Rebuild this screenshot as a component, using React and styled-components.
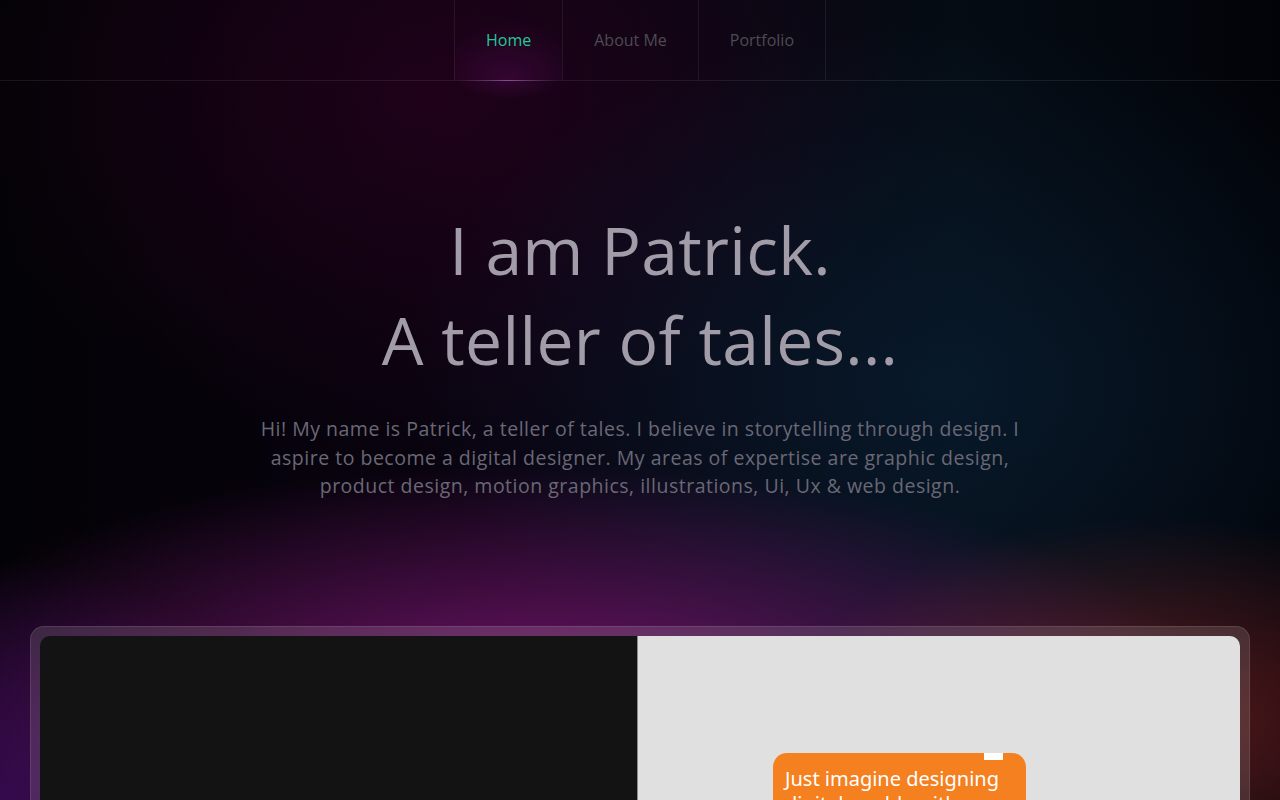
import styled, { createGlobalStyle } from "styled-components";

const GlobalStyle = createGlobalStyle`
  html, body {
    margin: 0;
    padding: 0;
    background: #040306;
  }
  * { box-sizing: border-box; }
`;

const Page = styled.div`
  min-height: 100vh;
  height: 800px;
  overflow: hidden;
  font-family: "Open Sans", "Liberation Sans", sans-serif;
  background:
    radial-gradient(ellipse 480px 270px at 90% 90%, rgba(160, 45, 45, 0.55), transparent 75%),
    radial-gradient(ellipse 860px 320px at 42% 90%, rgba(140, 25, 130, 0.85), transparent 80%),
    radial-gradient(ellipse 380px 300px at 0% 100%, rgba(55, 10, 100, 0.65), transparent 80%),
    radial-gradient(ellipse 700px 460px at 74% 48%, rgba(10, 38, 64, 0.5), transparent 78%),
    radial-gradient(ellipse 620px 440px at 34% 12%, rgba(45, 0, 32, 0.6), transparent 78%),
    linear-gradient(90deg, #030206 0%, #0a0310 40%, #050c14 75%, #020308 100%);
`;

const Nav = styled.nav`
  display: flex;
  justify-content: center;
  height: 81px;
  border-bottom: 1px solid rgba(255, 255, 255, 0.08);
`;

const NavItem = styled.a`
  position: relative;
  display: flex;
  align-items: center;
  padding: 0 31px;
  font-size: 16px;
  color: ${(p) => (p.$active ? "#22c89a" : "#4c4b53")};
  text-decoration: none;
  border-left: 1px solid rgba(255, 255, 255, 0.07);
  &:last-child {
    border-right: 1px solid rgba(255, 255, 255, 0.07);
  }
  ${(p) =>
    p.$active &&
    `
    background: radial-gradient(ellipse 90px 70px at 50% 100%, rgba(80, 10, 80, 0.45), transparent 85%);
    &::after {
      content: "";
      position: absolute;
      left: 0;
      right: 0;
      bottom: -1px;
      height: 1px;
      background: linear-gradient(90deg, transparent 4%, rgba(170, 100, 190, 0.7) 50%, transparent 96%);
    }
    &::before {
      content: "";
      position: absolute;
      left: 0;
      right: 0;
      top: 81px;
      height: 18px;
      background: radial-gradient(ellipse 50% 100% at 50% 0%, rgba(110, 20, 110, 0.25), transparent);
    }
  `}
`;

const Hero = styled.section`
  display: flex;
  flex-direction: column;
  align-items: center;
  padding-top: 123px;
  text-align: center;
`;

const Title = styled.h1`
  margin: 0;
  font-weight: 400;
  font-size: 66px;
  line-height: 90px;
  letter-spacing: 0.3px;
  color: #a19ca8;
`;

const Intro = styled.p`
  margin: 31px 0 0;
  width: 770px;
  font-size: 19.5px;
  line-height: 28.5px;
  letter-spacing: 0.5px;
  color: #6a6876;
`;

const Frame = styled.div`
  margin: 125px 30px 0;
  padding: 9px;
  border-radius: 14px;
  background: rgba(255, 255, 255, 0.13);
  border: 1px solid rgba(255, 255, 255, 0.1);
`;

const Screen = styled.div`
  display: grid;
  grid-template-columns: 598px 1fr;
  height: 400px;
  border-radius: 10px;
  overflow: hidden;
`;

const DarkPane = styled.div`
  background: #131313;
  border-right: 1px solid #8a8a8a;
`;

const LightPane = styled.div`
  background: #e0e0e0;
  padding: 117px 0 0 135px;
`;

const Bubble = styled.div`
  position: relative;
  width: 253px;
  padding: 13px 12px 20px;
  border-radius: 14px;
  background: #f58020;
  color: #ffffff;
  font-family: "Noto Sans", "Liberation Sans", sans-serif;
  font-size: 20px;
  line-height: 25px;
  &::after {
    content: "";
    position: absolute;
    top: 0;
    right: 20px;
    width: 19px;
    height: 7px;
    background: #ffffff;
    border: 3px solid #f58020;
    border-top: none;
    border-bottom: none;
  }
`;

export default function App() {
  return (
    <>
      <GlobalStyle />
      <Page>
        <Nav>
          <NavItem href="#" $active>
            Home
          </NavItem>
          <NavItem href="#">About Me</NavItem>
          <NavItem href="#">Portfolio</NavItem>
        </Nav>
        <Hero>
          <Title>
            I am Patrick.
            <br />A teller of tales...
          </Title>
          <Intro>
            Hi! My name is Patrick, a teller of tales. I believe in storytelling
            through design. I aspire to become a digital designer. My areas of
            expertise are graphic design, product design, motion graphics,
            illustrations, Ui, Ux &amp; web design.
          </Intro>
        </Hero>
        <Frame>
          <Screen>
            <DarkPane />
            <LightPane>
              <Bubble>Just imagine designing digital worlds with</Bubble>
            </LightPane>
          </Screen>
        </Frame>
      </Page>
    </>
  );
}
